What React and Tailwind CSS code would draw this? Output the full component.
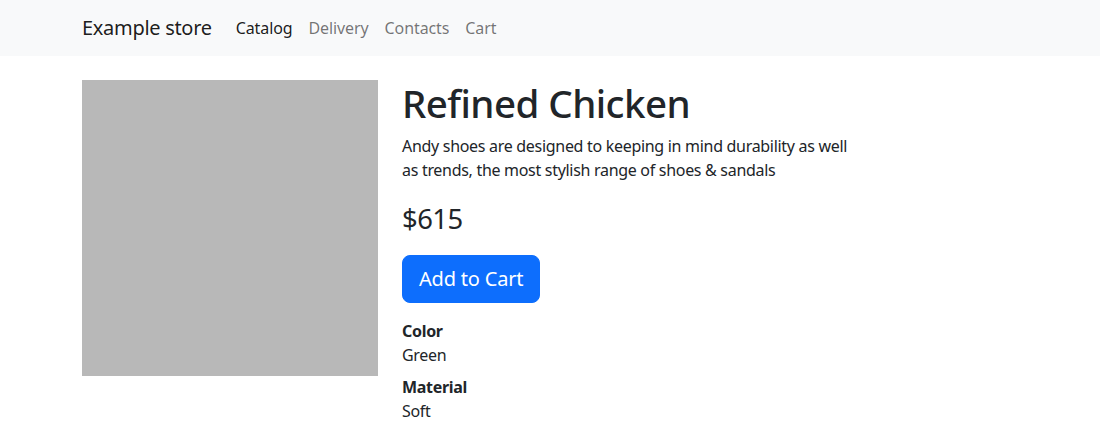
const navLinks = [
  { label: "Catalog", active: true },
  { label: "Delivery" },
  { label: "Contacts" },
  { label: "Cart" },
];

const specs = [
  { name: "Color", value: "Green" },
  { name: "Material", value: "Soft" },
];

export default function App() {
  return (
    <div className="min-h-screen bg-white text-[#212529] font-['Noto_Sans',sans-serif] tracking-[-0.3px] text-base leading-6">
      {/* ── Navbar ── */}
      <nav className="bg-[#f8f9fa] py-2">
        <div className="mx-auto flex max-w-[960px] items-center px-3">
          <a href="#" className="mr-4 py-[5px] text-[20px] leading-[30px] tracking-[-0.3px] text-black/90">
            Example store
          </a>
          <ul className="flex tracking-[-0.1px]">
            {navLinks.map((l) => (
              <li key={l.label}>
                <a href="#" className={`block px-2 py-2 ${l.active ? "text-black/90" : "text-black/55"}`}>
                  {l.label}
                </a>
              </li>
            ))}
          </ul>
        </div>
      </nav>

      {/* ── Product ── */}
      <main className="mx-auto mt-6 max-w-[960px] px-3">
        <div className="grid grid-cols-[296px_456px] gap-x-6">
          <div className="h-[296px] w-[296px] bg-[#b8b8b8]" />

          <div>
            <h1 className="mb-2 text-[38.5px] font-medium leading-[46px] tracking-[-0.55px]">Refined Chicken</h1>
            <p className="mb-4">
              Andy shoes are designed to keeping in mind durability as well as trends, the most stylish range of shoes &amp; sandals
            </p>
            <p className="mb-4 text-[27.4px] leading-[41px] tracking-[-0.5px]">$615</p>
            <button
              type="button"
              className="mb-4 rounded-lg border border-[#0d6efd] bg-[#0d6efd] px-4 py-2 text-[20px] leading-[30px] tracking-[-0.2px] text-white"
            >
              Add to Cart
            </button>
            <dl>
              {specs.map((s) => (
                <div key={s.name}>
                  <dt className="font-bold">{s.name}</dt>
                  <dd className="mb-2">{s.value}</dd>
                </div>
              ))}
            </dl>
          </div>
        </div>
      </main>
    </div>
  );
}
